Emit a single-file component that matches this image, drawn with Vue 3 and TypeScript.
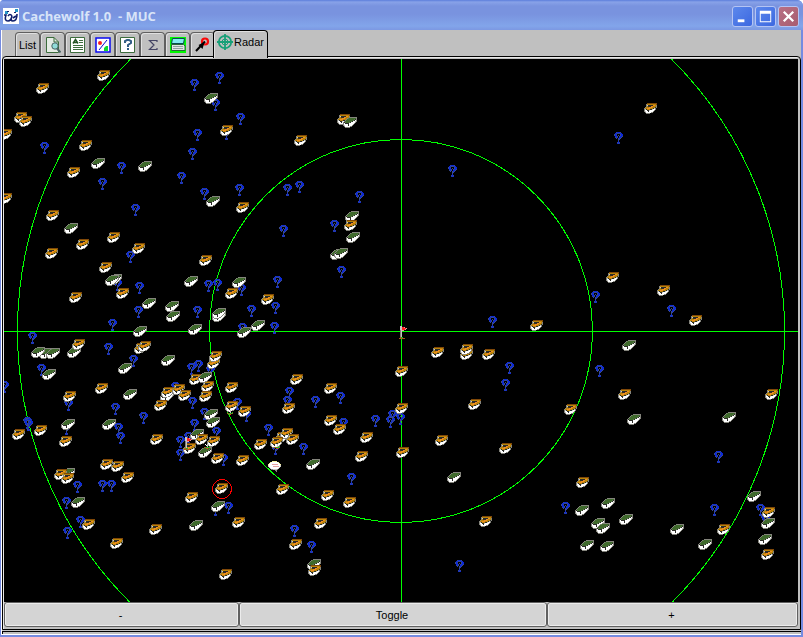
<script setup lang="ts">
import { ref } from 'vue'

type Point = [number, number]
interface Pixel { x: number; y: number; w: number; fill: string }

const palette: Record<string, string> = {
  g: '#84847c', k: '#2c2c28', w: '#ffffff', l: '#c8c8c4',
  b: '#804808', y: '#b88408', o: '#f08c20',
  d: '#3f6a2c', e: '#5d7d4c', s: '#f4f0a0',
  B: '#0a28d8', n: '#3a4a8c', r: '#ff2020', p: '#e8a0a0', m: '#a85a20', G: '#20c020',
}

// Turns rows of palette letters into horizontal runs of one colour.
function toPixels(rows: string[]): Pixel[] {
  const out: Pixel[] = []
  rows.forEach((row, y) => {
    let x = 0
    while (x < row.length) {
      let end = x + 1
      while (end < row.length && row[end] === row[x]) end++
      if (palette[row[x]]) out.push({ x, y, w: end - x, fill: palette[row[x]] })
      x = end
    }
  })
  return out
}

const sprites: Record<string, Pixel[]> = {
  multi: toPixels([
    '...bbbbbbbbbb',
    '..gyyyyyyyyyb',
    '..glkkkkkooyg',
    '..gykkkooyyyg',
    '.gyyyoooyyykg',
    'gyyoooyyyklg.',
    'glkyyykklwwg.',
    'gwwkklwwwwg..',
    'glwwkwwwwg...',
    '.gwwwwwgg....',
    '..gggg.......',
  ]),
  trad: toPixels([
    '......gggggggg',
    '....gedddddddg',
    '...gdddddddekg',
    '..gdddddddekwg',
    '.gddddddekwwlg',
    'gkedddekwwwwg.',
    'gwkkkkwwwwwg..',
    'gwwwwkwwwwg...',
    'glwwwkwwwg....',
    '.gwwwwwgg.....',
    '..ggggg.......',
  ]),
  mystery: toPixels([
    '..nBBBn..',
    '.BBnnnBB.',
    'nBn...nBB',
    'nBB.n.nBB',
    '.BBn.nBBn',
    '.nBn.BBn.',
    '..n.nBn..',
    '....nn...',
    '....n....',
    '....B....',
    '...nBn...',
    '...BnB...',
  ]),
  flag: toPixels([
    '.ll.....',
    '.llrrp..',
    '.llrrrrp',
    '.llrrrp.',
    '.glpp...',
    '.gl.....',
    '.gl.....',
    '.gl.....',
    '.gl.....',
    '.gl.....',
    '.gl.....',
    '.mGG....',
    'mmmmmm..',
  ]),
  base: toPixels([
    '.w.l...',
    '..wl...',
    '...l.G.',
    'mmGGGm.',
    '..mr...',
  ]),
  event: toPixels([
    '....sssss....',
    '..swwwwwwws..',
    '.swwwwwwwwws.',
    'swwwppppppwws',
    'swwwwwwwwwwwl',
    'lwwwwppppppwl',
    '.lwwwwwwwwwl.',
    '..lwwwwwwwl..',
    '...ggllllg...',
    '.......gg....',
    '........g....',
  ]),
}

const mystery: Point[] = [
  [194, 85], [197, 135], [44, 148], [192, 154], [121, 168], [102, 184], [181, 178], [135, 210], [130, 257],
  [219, 78], [215, 105], [240, 119], [226, 134], [204, 194], [239, 190], [287, 190], [299, 187], [283, 231],
  [359, 197], [334, 226], [139, 288], [138, 312], [117, 285], [197, 312], [112, 325], [108, 349], [32, 338],
  [133, 361], [41, 370], [4, 387], [68, 405], [115, 409], [192, 403], [143, 418], [191, 369], [198, 366],
  [175, 388], [27, 423], [28, 425], [208, 286], [217, 285], [241, 290], [277, 282], [275, 308], [251, 311],
  [274, 328], [242, 329], [341, 272], [210, 371], [204, 414], [237, 404], [246, 416], [289, 393], [287, 402],
  [315, 402], [340, 398], [66, 429], [118, 429], [120, 438], [77, 487], [102, 486], [111, 486], [66, 503],
  [80, 522], [67, 533], [194, 425], [180, 442], [180, 455], [216, 433], [223, 460], [268, 430], [188, 438],
  [275, 449], [303, 449], [351, 479], [343, 424], [375, 421], [390, 422], [392, 416], [400, 419], [228, 508],
  [215, 510], [294, 531], [311, 547], [565, 508], [714, 510], [760, 510], [765, 520], [718, 457], [618, 138],
  [452, 171], [595, 297], [671, 311], [492, 322], [509, 368], [505, 385], [599, 371], [459, 566],
]

const traditional: Point[] = [
  [98, 163], [145, 166], [71, 228], [211, 98], [213, 201], [352, 216], [353, 237], [337, 254], [341, 253],
  [115, 279], [112, 280], [191, 281], [149, 303], [172, 306], [173, 316], [140, 331], [195, 329], [46, 353],
  [38, 352], [53, 353], [74, 352], [125, 368], [168, 360], [49, 374], [130, 394], [167, 396], [239, 282],
  [219, 316], [219, 313], [244, 332], [258, 325], [211, 414], [213, 422], [68, 424], [109, 424], [78, 502],
  [68, 473], [196, 525], [197, 434], [205, 452], [313, 464], [218, 506], [314, 564], [582, 510], [608, 503],
  [626, 519], [598, 523], [603, 528], [587, 545], [607, 546], [677, 529], [705, 544], [754, 496], [768, 523],
  [765, 539], [629, 345], [634, 419], [729, 417], [454, 477],
]

const multi: Point[] = [
  [103, 75], [42, 88], [20, 117], [25, 121], [5, 134], [85, 145], [73, 172], [5, 198], [52, 215], [113, 237],
  [82, 244], [138, 248], [51, 253], [226, 130], [343, 119], [300, 140], [242, 207], [350, 225], [205, 260],
  [105, 267], [75, 297], [122, 293], [78, 344], [140, 348], [144, 346], [101, 388], [69, 396], [167, 392],
  [178, 389], [184, 395], [160, 405], [195, 379], [231, 293], [267, 299], [213, 363], [215, 356], [207, 386],
  [205, 396], [231, 387], [231, 406], [244, 411], [296, 379], [330, 388], [288, 408], [401, 371], [401, 408],
  [330, 420], [18, 434], [40, 430], [65, 441], [60, 474], [67, 478], [106, 464], [117, 466], [127, 477],
  [156, 439], [191, 497], [155, 529], [116, 543], [88, 524], [201, 439], [213, 441], [189, 448], [217, 458],
  [242, 460], [260, 444], [281, 437], [286, 433], [276, 442], [292, 439], [339, 429], [366, 437], [361, 456],
  [402, 452], [282, 489], [327, 495], [349, 502], [221, 488], [238, 522], [320, 523], [295, 544], [225, 574],
  [314, 570], [441, 440], [582, 482], [723, 529], [768, 512], [767, 554], [650, 108], [612, 277], [663, 290],
  [695, 320], [536, 325], [437, 352], [466, 354], [466, 349], [488, 354], [474, 404], [570, 409], [505, 448],
  [485, 521], [624, 394], [771, 394],
]

const layers: { sprite: string; half: Point; points: Point[] }[] = [
  { sprite: 'mystery', half: [4, 6], points: mystery },
  { sprite: 'trad', half: [7, 5], points: traditional },
  { sprite: 'multi', half: [6, 5], points: multi },
  { sprite: 'trad', half: [7, 5], points: [[350, 122], [205, 377]] },
  { sprite: 'base', half: [3, 2], points: [[230, 412], [277, 446], [207, 446]] },
  { sprite: 'flag', half: [3, 6], points: [[402, 332], [187, 443]] },
  { sprite: 'event', half: [6, 5], points: [[274, 466]] },
]

const tabs = ['List', 'Details', 'Description', 'Images', 'Hints', 'Solver', 'Calculator', 'Goto', 'Radar']
const active = ref('Radar')
const zoomLevel = ref(1)
const showCaches = ref(true)
</script>

<template>
  <div class="window">
    <header class="titlebar">
      <svg class="logo" width="16" height="16" viewBox="0 0 16 16" aria-hidden="true">
        <rect width="16" height="16" fill="#fff" />
        <path d="M1 7L3 7Q1 13 5 13Q8 13 9 8Q7 13 10 13Q14 13 14 6M5 8Q7 5 9 8M10 10L13 8" fill="none" stroke="#10206c" stroke-width="1.600" />
        <path d="M2 3h3v3H2zM12 1h3v3h-3z" fill="#2898c8" />
        <path d="M4 3h2v1H4zM11 4h2v1h-2z" fill="#10206c" />
      </svg>
      <h1>Cachewolf 1.0&nbsp; - MUC</h1>
      <div class="controls">
        <button type="button" aria-label="Minimize"><svg viewBox="0 0 20 20"><path d="M5 13h7v3H5z" fill="#fff" /></svg></button>
        <button type="button" aria-label="Maximize"><svg viewBox="0 0 20 20"><path d="M4 4h12v12H4zM5 7v8h10V7z" fill="#fff" fill-rule="evenodd" /></svg></button>
        <button type="button" class="close" aria-label="Close"><svg viewBox="0 0 20 20"><path d="M5 5 L15 15 M15 5 L5 15" stroke="#fff" stroke-width="2.4" /></svg></button>
      </div>
    </header>

    <main class="client">
      <nav class="tabs" role="tablist">
        <button
          v-for="tab in tabs"
          :key="tab"
          type="button"
          role="tab"
          :aria-label="tab"
          :aria-selected="active === tab"
          :class="['tab', { active: active === tab }]"
          @click="active = tab"
        >
          <span v-if="tab === 'List'">List</span>
          <svg v-else-if="tab === 'Details'" class="icon" viewBox="0 0 16 16">
            <path d="M1.5 .5H9L13.500 5V15.500H1.500Z" fill="#e4ece4" stroke="#3c6c3c" />
            <path d="M9 .5V5H13.500" fill="none" stroke="#3c6c3c" />
            <circle cx="10" cy="9" r="3.200" fill="#90dcd8" stroke="#486464" />
            <path d="M12 11.500L15.500 15.500" stroke="#486464" stroke-width="2" />
          </svg>
          <svg v-else-if="tab === 'Description'" class="icon" viewBox="0 0 16 16">
            <path d="M.5 .5H14.500V15.500H.5Z" fill="#fff" stroke="#3c6c3c" />
            <path d="M3 6.500L5.500 2.500L8 6.500M4 5.500H7" fill="none" stroke="#245424" stroke-width="1.500" />
            <path d="M9 3.500H13M9 5.500H13M3 8.500H13M3 10.500H13M3 12.500H13" stroke="#3c6c3c" />
          </svg>
          <svg v-else-if="tab === 'Images'" class="icon" viewBox="0 0 16 16">
            <rect x="1" y="1" width="14" height="14" fill="#fff" stroke="#0808f0" stroke-width="1.500" />
            <circle cx="5" cy="6" r="2" fill="#f82020" />
            <path d="M9 14V11L11 9H13V14Z" fill="#10d830" />
            <path d="M4 13L12 3" stroke="#0808d0" />
          </svg>
          <svg v-else-if="tab === 'Hints'" class="icon" viewBox="0 0 16 16">
            <path d="M.5 .5H14.500V15.500H.5Z" fill="#fff" stroke="#3c6c3c" />
            <path d="M5 6V4L7 3H9L11 4V6L8 8V10" fill="none" stroke="#305c84" stroke-width="2" />
            <path d="M7 11h2v2H7z" fill="#305c84" />
          </svg>
          <svg v-else-if="tab === 'Solver'" class="icon" viewBox="0 0 16 16">
            <path d="M12 5V3.500H4.500L9 8L4.500 12.500H12V11" fill="none" stroke="#444464" stroke-width="1.200" />
          </svg>
          <svg v-else-if="tab === 'Calculator'" class="icon" viewBox="0 0 16 16">
            <rect width="16" height="16" fill="#00f800" />
            <path d="M2.500 1.500H14.500L13.500 6.500H1.500Z" fill="#84ecf0" stroke="#084c50" />
            <path d="M1.500 7.500H13.500L15 9V13.500H1.500Z" fill="#e0e4e4" stroke="#286838" />
            <path d="M3 9.500H13M3 11.500H13" stroke="#90a0a0" />
          </svg>
          <svg v-else-if="tab === 'Goto'" class="icon" viewBox="0 0 16 16">
            <circle cx="10" cy="4.500" r="3" fill="none" stroke="#f80808" stroke-width="2.200" />
            <path d="M10 4.500L1 14" stroke="#000" stroke-width="2" />
            <path d="M3.500 8L7.500 12L9.500 5Z" fill="#000" />
          </svg>
          <template v-else>
            <svg class="icon" viewBox="0 0 16 16">
              <g fill="none" stroke="#18a078">
                <circle cx="8" cy="8" r="6.200" stroke-width="1.800" />
                <circle cx="8" cy="8" r="3" />
                <path d="M8 0V16M0 8H16" stroke-width="1.800" />
              </g>
            </svg>
            <span>Radar</span>
          </template>
        </button>
      </nav>

      <section class="panel" role="tabpanel" aria-label="Radar">
        <div class="map">
          <svg viewBox="4 59 794 543" preserveAspectRatio="xMidYMid slice" shape-rendering="crispEdges">
            <defs>
              <g v-for="(pixels, name) in sprites" :id="`sprite-${name}`" :key="name">
                <rect v-for="(p, i) in pixels" :key="i" :x="p.x" :y="p.y" :width="p.w" height="1" :fill="p.fill" />
              </g>
            </defs>
            <g fill="none" stroke="#00ff00" stroke-width="1">
              <path d="M401.500 59V602M4 331.500H798" />
              <circle cx="401" cy="331" r="191.500" />
              <circle cx="401" cy="331" r="383.500" />
            </g>
            <template v-if="showCaches">
              <g v-for="(layer, l) in layers" :key="l">
                <use
                  v-for="([x, y], i) in layer.points"
                  :key="i"
                  :href="`#sprite-${layer.sprite}`"
                  :x="x - layer.half[0]"
                  :y="y - layer.half[1]"
                />
              </g>
            </template>
            <circle cx="222" cy="489" r="9.500" fill="none" stroke="#ff0000" />
          </svg>
        </div>
        <div class="actions">
          <button type="button" @click="zoomLevel--">-</button>
          <button type="button" @click="showCaches = !showCaches">Toggle</button>
          <button type="button" @click="zoomLevel++">+</button>
        </div>
      </section>
      <footer class="status"></footer>
    </main>
  </div>
</template>

<style>
body {
  margin: 0;
  background: #fff;
}
</style>

<style scoped>
.window {
  box-sizing: border-box;
  display: flex;
  flex-direction: column;
  height: 100vh;
  padding: 0 2px 2px 1px;
  background: #758be0;
  border-radius: 4px 6px 0 0;
  overflow: hidden;
  font: 11px/14px "Liberation Sans", Arial, sans-serif;
  color: #000;
}
.titlebar {
  display: flex;
  flex: none;
  align-items: center;
  gap: 3px;
  height: 30px;
  margin: 0 -2px 0 -1px;
  padding: 2px 4px 0 3px;
  box-sizing: border-box;
  background: linear-gradient(#5c7edb 0, #88a2e8 2px, #7993df 6px, #7993df 14px, #82a5ea 26px, #7c98e2 30px);
}
h1 {
  flex: 1;
  margin: 0;
  font: 700 13px/18px "Open Sans", "Noto Sans", sans-serif;
  color: #d8e4f8;
  white-space: nowrap;
}
.controls {
  display: flex;
  gap: 2px;
}
.controls button {
  width: 21px;
  height: 21px;
  padding: 0;
  border: 1px solid #b4c4f4;
  border-radius: 3px;
  background: linear-gradient(135deg, #5c88ec, #3c68e0);
}
.controls .close {
  background: linear-gradient(135deg, #b87084, #a85c70);
}
.controls svg {
  display: block;
  width: 100%;
  height: 100%;
}
.client {
  display: flex;
  flex: 1;
  flex-direction: column;
  min-height: 0;
  background: #c0c0c0;
  border-left: 1px solid #fff;
  border-bottom: 1px solid #fff;
}
.tabs {
  display: flex;
  flex: none;
  align-items: flex-end;
  height: 26px;
  padding-left: 13px;
}
.tab {
  display: flex;
  align-items: center;
  justify-content: center;
  gap: 1px;
  box-sizing: border-box;
  width: 25px;
  height: 24px;
  padding: 0;
  border: 1px solid #606060;
  border-bottom: 0;
  border-radius: 4px 4px 0 0;
  background: #c0c0c0;
  box-shadow: inset 1px 1px #e0e0e0;
  font: inherit;
  color: inherit;
}
.tab.active {
  position: relative;
  width: 55px;
  height: 28px;
  margin: 0 0 -2px -2px;
  padding-bottom: 6px;
  border-color: #000;
}
.icon {
  flex: none;
  width: 16px;
  height: 16px;
}
.panel {
  display: flex;
  flex: 1;
  flex-direction: column;
  min-height: 0;
  padding: 2px 2px 2px 1px;
  border: 1px solid #000;
  border-radius: 4px 4px 0 0;
  box-shadow: inset 1px 1px #e8e8e8;
}
.map {
  flex: 1;
  min-height: 0;
  background: #000;
}
.map svg {
  display: block;
  width: 100%;
  height: 100%;
}
.actions {
  display: grid;
  flex: none;
  grid-template-columns: 235fr 308fr 251fr;
}
.actions button {
  height: 25px;
  padding: 0 2px 0 0;
  border: 1px solid #606060;
  border-radius: 3px;
  background: #d4d4d4;
  box-shadow: inset 0 0 0 1px #ececec;
  font: inherit;
  color: inherit;
}
.status {
  flex: none;
  box-sizing: border-box;
  height: 3px;
  margin-top: 1px;
  border-top: 1px solid #000;
  box-shadow: inset 1px 0 #000;
}
</style>
